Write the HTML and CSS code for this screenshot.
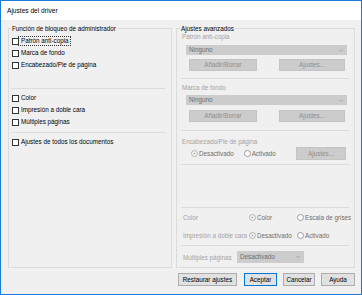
FILE: index.html
```html
<!DOCTYPE html>
<html lang="es">
<head>
    <meta charset="UTF-8">
    <title>Ajustes del driver</title>
    <link rel="stylesheet" href="styles.css">
</head>
<body>
    <div class="window">
        <div class="titlebar">Ajustes del driver</div>
        <div class="content">
            <div class="groups">
                <fieldset class="group group-left">
                    <legend>Función de bloqueo de administrador</legend>
                    <div class="checks checks-top">
                        <div class="check"><span class="box"></span><span class="text focus">Patrón anti-copia</span></div>
                        <div class="check"><span class="box"></span><span class="text">Marca de fondo</span></div>
                        <div class="check"><span class="box"></span><span class="text">Encabezado/Pie de página</span></div>
                    </div>
                    <div class="sep sep-left sep-a"></div>
                    <div class="checks checks-mid">
                        <div class="check"><span class="box"></span><span class="text">Color</span></div>
                        <div class="check"><span class="box"></span><span class="text">Impresión a doble cara</span></div>
                        <div class="check"><span class="box"></span><span class="text">Múltiples páginas</span></div>
                    </div>
                    <div class="sep sep-left sep-b"></div>
                    <div class="checks checks-all">
                        <div class="check"><span class="box"></span><span class="text">Ajustes de todos los documentos</span></div>
                    </div>
                </fieldset>

                <fieldset class="group group-right">
                    <legend>Ajustes avanzados</legend>

                    <div class="caption cap-1">Patrón anti-copia</div>
                    <div class="select select-wide dd-1">Ninguno<span class="chev"></span></div>
                    <div class="btn-row btns-1">
                        <span class="btn off w-add">Añadir/Borrar</span>
                        <span class="btn off w-set">Ajustes...</span>
                    </div>
                    <div class="sep sep-right sep-1"></div>

                    <div class="caption cap-2">Marca de fondo</div>
                    <div class="select select-wide dd-2">Ninguno<span class="chev"></span></div>
                    <div class="btn-row btns-2">
                        <span class="btn off w-add">Añadir/Borrar</span>
                        <span class="btn off w-set">Ajustes...</span>
                    </div>
                    <div class="sep sep-right sep-2"></div>

                    <div class="caption cap-3">Encabezado/Pie de página</div>
                    <div class="radio-row">
                        <span class="radio r-desact"><span class="dot on"></span>Desactivado</span>
                        <span class="radio r-act"><span class="dot"></span>Activado</span>
                        <span class="btn off w-set2">Ajustes...</span>
                    </div>
                    <div class="sep sep-right sep-3"></div>

                    <div class="sep sep-right sep-4"></div>
                    <div class="opt-row opt-color">
                        <span class="opt-label">Color</span>
                        <span class="radio"><span class="dot on"></span>Color</span>
                        <span class="radio"><span class="dot"></span>Escala de grises</span>
                    </div>
                    <div class="opt-row opt-duplex">
                        <span class="opt-label">Impresión a doble cara</span>
                        <span class="radio"><span class="dot on"></span>Desactivado</span>
                        <span class="radio"><span class="dot"></span>Activado</span>
                    </div>
                    <div class="sep sep-right sep-5"></div>
                    <div class="pages-row">
                        <span class="opt-label pages-label">Múltiples páginas</span>
                        <div class="select select-small">Desactivado<span class="chev"></span></div>
                    </div>
                </fieldset>
            </div>

            <div class="footer">
                <span class="btn w-reset">Restaurar ajustes</span>
                <span class="btn default w-ok">Aceptar</span>
                <span class="btn w-cancel">Cancelar</span>
                <span class="btn w-help">Ayuda</span>
            </div>
        </div>
    </div>
</body>
</html>
```

FILE: styles.css
```css
* {
    box-sizing: border-box;
}

body {
    margin: 0;
    font-family: 'Liberation Sans', Arial, sans-serif;
    font-size: 6.3px;
    color: #000;
}

.window {
    width: 362px;
    height: 295px;
    border: 1px solid #1c7cd5;
    background-color: #f0f0f0;
    display: flex;
    flex-direction: column;
}

.titlebar {
    height: 19px;
    line-height: 19px;
    background-color: #fff;
    padding-left: 6px;
    font-size: 6.6px;
}

.content {
    flex: 1;
    padding: 4px 6px 0 7px;
    display: flex;
    flex-direction: column;
}

.groups {
    display: flex;
    gap: 4px;
    height: 244px;
}

.group {
    margin: 0;
    padding: 0;
    border: 1px solid #dcdcdc;
    min-width: 0;
}

.group legend {
    height: 9px;
    line-height: 9px;
    padding: 0 1px;
}

.group-left {
    width: 164px;
}

.group-left legend {
    margin-left: 2px;
}

.group-right {
    width: 179px;
}

.group-right legend {
    margin-left: 3px;
}

/* casillas de la izquierda */
.checks-top {
    margin-top: 2px;
}

.checks-mid,
.checks-all {
    margin-top: 3px;
}

.check {
    display: flex;
    align-items: center;
    height: 12px;
    padding-left: 3px;
}

.box {
    width: 7px;
    height: 7px;
    border: 1px solid #333;
    background-color: #fff;
}

.check .text {
    margin-left: 2px;
    line-height: 8px;
}

.check .focus {
    margin-left: 0;
    padding: 0 1px 0 2px;
    outline: 1px dotted #333;
}

.sep {
    height: 1px;
    background-color: #dcdcdc;
}

.sep-left {
    margin: 0 6px 0 2px;
}

.sep-a {
    margin-top: 17px;
}

.sep-b {
    margin-top: 4px;
}

/* ajustes avanzados */
.caption {
    height: 8px;
    line-height: 8px;
    padding-left: 5px;
    color: #a3a3a3;
}

.cap-2 {
    margin-top: 5px;
}

.cap-3 {
    margin-top: 7px;
}

.select {
    position: relative;
    height: 10px;
    line-height: 10px;
    padding-left: 3px;
    background-color: #cccccc;
    color: #6d6d6d;
}

.select-wide {
    margin: 4px 7px 0 9px;
}

.dd-2 {
    margin-top: 3px;
}

.chev {
    position: absolute;
    right: 4px;
    top: 3px;
    width: 4px;
    height: 4px;
    border-right: 1px solid #a8a8a8;
    border-bottom: 1px solid #a8a8a8;
    transform: scale(0.8, 0.55) rotate(45deg);
}

.btn-row {
    display: flex;
    justify-content: space-between;
    padding: 0 9px 0 12px;
    margin-top: 4px;
}

.btns-2 {
    margin-top: 5px;
}

.btn {
    height: 12px;
    line-height: 10px;
    text-align: center;
    border: 1px solid #adadad;
    background-color: #e1e1e1;
}

.btn.off {
    border-color: #c4c4c4;
    background-color: #cccccc;
    color: #8e8e8e;
}

.w-add {
    width: 68px;
}

.w-set {
    width: 66px;
}

.w-set2 {
    width: 50px;
    height: 13px;
    line-height: 11px;
    margin-left: auto;
}

.sep-right {
    margin: 0 5px 0 4px;
}

.sep-1 {
    margin-top: 7px;
}

.sep-2 {
    margin-top: 8px;
}

.sep-3 {
    margin-top: 4px;
}

.sep-4 {
    margin-top: 42px;
}

.sep-5 {
    margin-top: 4px;
}

.radio-row {
    display: flex;
    align-items: center;
    height: 13px;
    margin-top: 1px;
    padding: 0 8px 0 14px;
}

.radio {
    display: inline-flex;
    align-items: center;
    color: #6d6d6d;
}

.r-act {
    margin-left: 10px;
}

.dot {
    width: 7px;
    height: 7px;
    margin-right: 1px;
    border-radius: 50%;
    border: 1px solid #9a9a9a;
    background-color: #fff;
}

.dot.on {
    border-color: #c0c0c0;
    background-color: #a8a8a8;
    box-shadow: inset 0 0 0 1.5px #fff;
}

.opt-row {
    display: grid;
    grid-template-columns: 66px 48px 1fr;
    align-items: center;
    height: 11px;
    padding-left: 6px;
}

.opt-color {
    margin-top: 4px;
}

.opt-duplex {
    margin-top: 7px;
}

.opt-label {
    color: #a3a3a3;
}

.pages-row {
    display: flex;
    align-items: center;
    margin-top: 5px;
    padding-left: 6px;
}

.pages-label {
    width: 54px;
}

.select-small {
    width: 67px;
    height: 12px;
    line-height: 12px;
}

/* botones inferiores */
.footer {
    display: flex;
    justify-content: flex-end;
    gap: 6px;
    margin-top: 5px;
}

.footer .btn {
    height: 13px;
    line-height: 11px;
}

.w-reset {
    width: 59px;
    margin-right: 1px;
}

.w-ok {
    width: 33px;
}

.w-cancel {
    width: 32px;
}

.w-help {
    width: 34px;
}

.btn.default {
    border-color: #0078d7;
}
```
